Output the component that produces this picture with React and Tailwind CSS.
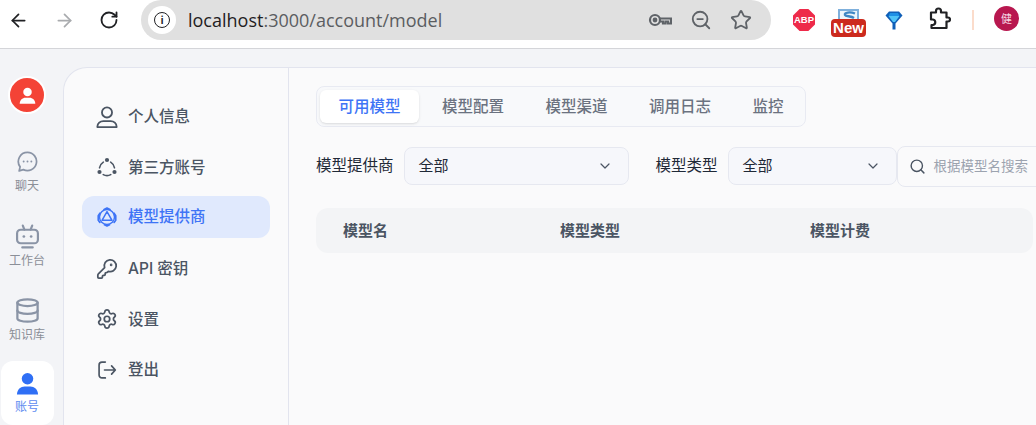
import React from 'react';
import { ArrowLeft, ArrowRight, RotateCw, ZoomOut, Star, ChevronDown, Search, KeyRound, Settings, Database } from 'lucide-react';

const FONT = "font-['Inter','Noto_Sans_CJK_SC',sans-serif]";

const UserOutline = ({ className }) => (
  <svg viewBox="0 0 24 24" fill="none" stroke="currentColor" strokeWidth="2" strokeLinecap="round" strokeLinejoin="round" className={className}>
    <circle cx="12" cy="7" r="5.500" />
    <path d="M1.500 23v-.5c0-3.500 3-6 6.500-6h8c3.500 0 6.500 2.500 6.500 6v.5z" />
  </svg>
);

const ThirdParty = ({ className }) => (
  <svg viewBox="0 0 24 24" fill="none" stroke="currentColor" strokeWidth="1.900" strokeLinecap="round" className={className}>
    <path d="M7.600 6.200A10 10 0 0 0 3 13" />
    <path d="M16.400 6.200A10 10 0 0 1 21 13" />
    <path d="M7.500 21.200a10 10 0 0 0 9 0" />
    <circle cx="12" cy="3.600" r="2.500" fill="currentColor" stroke="none" />
    <circle cx="3" cy="18" r="2.500" fill="currentColor" stroke="none" />
    <circle cx="21" cy="18" r="2.500" fill="currentColor" stroke="none" />
  </svg>
);

const Provider = ({ className }) => (
  <svg viewBox="0 0 24 24" fill="none" stroke="currentColor" strokeWidth="2" strokeLinejoin="round" strokeLinecap="round" className={className}>
    <path d="M8.500 3L12 1.200 15.500 3M20.500 7.500L22.500 10.500v5.500L20.500 18.500M3.500 18.500L1.500 16v-5.500L3.500 7.500M9 21.300l3 1.500 3-1.500" />
    <circle cx="12" cy="12" r="9" strokeWidth="1.700" />
    <path d="M12 5.500l6 10.500H6z" strokeWidth="1.800" />
  </svg>
);

const Logout = ({ className }) => (
  <svg viewBox="0 0 24 24" fill="none" stroke="currentColor" strokeWidth="2" strokeLinecap="round" strokeLinejoin="round" className={className}>
    <path d="M10 2.500H6A3.500 3.500 0 0 0 2.500 6v12A3.500 3.500 0 0 0 6 21.500h4" />
    <path d="M9 12h13M17.500 7l4.500 5-4.500 5" />
  </svg>
);

const ChatDots = ({ className }) => (
  <svg viewBox="0 0 24 24" fill="none" stroke="currentColor" strokeWidth="1.800" strokeLinejoin="round" className={className}>
    <path d="M12 2.500a9.500 9.500 0 1 1-4.300 18L3.300 21.800l1-4.200A9.500 9.500 0 0 1 12 2.500z" />
    <circle cx="8" cy="12" r="1" fill="currentColor" stroke="none" />
    <circle cx="12" cy="12" r="1" fill="currentColor" stroke="none" />
    <circle cx="16" cy="12" r="1" fill="currentColor" stroke="none" />
  </svg>
);

const BotFace = ({ className }) => (
  <svg viewBox="0 0 24 24" fill="none" stroke="currentColor" strokeWidth="2.100" strokeLinecap="round" className={className}>
    <path d="M7.500 1.500L9 5.500M16.500 1.500L15 5.500" />
    <rect x="2" y="5.500" width="20" height="13" rx="3.500" />
    <circle cx="8.500" cy="12" r="1.300" fill="currentColor" stroke="none" />
    <circle cx="15.500" cy="12" r="1.300" fill="currentColor" stroke="none" />
    <path d="M7 22.500h10" />
  </svg>
);

const UserSolid = ({ className }) => (
  <svg viewBox="0 0 24 24" fill="currentColor" className={className}>
    <circle cx="12" cy="7" r="6" />
    <path d="M1 23.500c0-5.500 4-8.500 8-8.500h6c4 0 8 3 8 8.500z" />
  </svg>
);

const Gem = () => (
  <svg viewBox="0 0 20 20" className="w-[20px] h-[20px]">
    <path d="M1.500 5.500L5 1.500h10l3.500 4-7 8v6h-3v-6z" fill="#0f5fb8" />
    <path d="M4.500 6h11L11 12H9z" fill="#4fc3f7" />
    <path d="M6 3h8l1.500 3h-11z" fill="#1e90e6" />
  </svg>
);

const PuzzlePiece = () => (
  <svg viewBox="0 0 24 24" fill="none" stroke="#202124" strokeWidth="2.200" strokeLinejoin="round" className="w-[24px] h-[24px]">
    <path d="M4 5.500h5V4a2.500 2.500 0 0 1 5 0v1.500h5.500v5H21a2 2 0 0 1 0 4h-1.500v6.500H4.500V18H6a2.800 2.800 0 0 0 0-5.500H4z" />
  </svg>
);

const KeyIcon = () => (
  <svg viewBox="0 0 24 24" fill="none" stroke="#5f6368" strokeWidth="2.200" className="w-[24px] h-[24px]">
    <circle cx="7" cy="12" r="5" />
    <circle cx="7" cy="12" r="1.300" fill="#5f6368" />
    <path d="M12 10.500H23V15.500H20V13.500H17.500V15.500H15V13.500H12" />
  </svg>
);

// the extension logo that sits behind the "New" badge
const ExtLogo = ({ className }) => (
  <svg viewBox="0 0 21 11" className={className}>
    <path d="M1 11V1h19v10" fill="#eef5fb" stroke="#7fb0dc" strokeWidth="2" />
    <path d="M17 4.500C12 2.500 6 3.500 7 6c.6 1.500 6 1 9 3" fill="none" stroke="#3f86c4" strokeWidth="2.400" />
  </svg>
);

const railItems = [
  { icon: ChatDots, label: '聊天', box: 'h-[75px]', size: 'w-[23px] h-[23px]' },
  { icon: BotFace, label: '工作台', box: 'h-[74px]', size: 'w-[25px] h-[25px]' },
  { icon: Database, label: '知识库', box: 'h-[74px]', size: 'w-[27px] h-[27px]' },
];

const navItems = [
  { icon: UserOutline, label: '个人信息', size: 'w-[22px] h-[22px]' },
  { icon: ThirdParty, label: '第三方账号', size: 'w-[20px] h-[20px]' },
  { icon: Provider, label: '模型提供商', active: true, size: 'w-[20px] h-[20px]' },
  { icon: KeyRound, label: 'API 密钥', size: 'w-[22px] h-[22px]' },
  { icon: Settings, label: '设置', size: 'w-[22px] h-[22px]' },
  { icon: Logout, label: '登出', size: 'w-[20px] h-[20px]' },
];

const tabs = ['可用模型', '模型配置', '模型渠道', '调用日志', '监控'];

const Toolbar = () => (
  <header className="h-[49px] shrink-0 bg-white border-b border-[#d4d5d9] flex items-start">
    <div className="flex items-center h-[40px]">
      <div className="w-[141px] flex items-center pl-[8px] gap-[24.500px]">
        <ArrowLeft className="w-[21px] h-[21px] text-[#202124]" strokeWidth={2} />
        <ArrowRight className="w-[21px] h-[21px] text-[#a9abae]" strokeWidth={2} />
        <RotateCw className="w-[20px] h-[20px] text-[#202124]" strokeWidth={2.2} />
      </div>
      <div className="w-[630px] h-[40px] rounded-full bg-[#e0e0e0] flex items-center pl-[7px] pr-[19px]">
        <div className="w-[28px] h-[28px] rounded-full bg-white flex items-center justify-center">
          <div className="w-[16px] h-[16px] rounded-full border-[1.5px] border-[#202124] flex items-center justify-center text-[10px] leading-none font-bold text-[#202124]">i</div>
        </div>
        <div className="ml-[12px] flex-1 font-['Open_Sans',sans-serif] text-[18px] text-[#5b5d61]">
          <span className="text-[#1f2023]">localhost</span>:3000/account/model
        </div>
        <div className="flex items-center gap-[18px]">
          <KeyIcon />
          <ZoomOut className="w-[22px] h-[22px] text-[#5f6368]" strokeWidth={2} />
          <Star className="w-[22px] h-[22px] text-[#5f6368]" strokeWidth={2} />
        </div>
      </div>
      <div className="flex items-center">
        <div className="ml-[22px] w-[22px] h-[22px] bg-[#ee2a4a] [clip-path:polygon(30%_0,70%_0,100%_30%,100%_70%,70%_100%,30%_100%,0_70%,0_30%)] text-white text-[9.500px] font-bold flex items-center justify-center font-['Liberation_Sans',sans-serif]">ABP</div>
        <div className="relative ml-[16px] w-[36px] h-[36px]">
          <ExtLogo className="absolute left-[7px] top-[7px] w-[21px] h-[11px]" />
          <div className="absolute left-0 top-[17px] w-[35px] h-[18px] bg-[#cc2a1d] rounded-[4px] text-white text-[15px] leading-[18px] font-bold text-center font-['Liberation_Sans',sans-serif]">New</div>
        </div>
        <div className="ml-[17px]"><Gem /></div>
        <div className="ml-[23px] mb-[3px]"><PuzzlePiece /></div>
        <div className="ml-[21px] w-[2px] h-[20px] bg-[#fbdccb]" />
        <div className="ml-[20px] mb-[3px] w-[25px] h-[25px] rounded-full bg-[#b8174f] text-[#f7d9e4] text-[11px] flex items-center justify-center font-['Noto_Sans_CJK_SC',sans-serif]">健</div>
      </div>
    </div>
  </header>
);

const Rail = () => (
  <aside className="w-[63px] shrink-0 flex flex-col items-center pt-[9px] pr-[9px]">
    <div className="w-[38px] h-[38px] rounded-full bg-[#f44336] border-2 border-white shrink-0 flex items-center justify-center text-white">
      <UserSolid className="w-[17px] h-[17px]" />
    </div>
    <div className="flex flex-col items-center mt-[28px]">
      {railItems.map((item) => (
        <div key={item.label} className={`${item.box} w-[54px] flex flex-col items-center justify-start pt-[6px] text-[#8a94a6]`}>
          <div className="h-[26px] flex items-center justify-center"><item.icon className={item.size} strokeWidth={2} /></div>
          <span className="mt-[3px] text-[12px] leading-[18px] text-[#8b8f98]">{item.label}</span>
        </div>
      ))}
    </div>
    <div className="mt-[-4px] w-[53px] h-[64px] shrink-0 bg-white rounded-xl flex flex-col items-center pt-[11px] text-[#2f6ff5]">
      <UserSolid className="w-[23px] h-[23px]" />
      <span className="mt-[3px] text-[12px] leading-[18px] text-[#5d8bf0]">账号</span>
    </div>
  </aside>
);

const NavPanel = () => (
  <nav className="w-[225px] shrink-0 border-r border-[#e2e4ee] px-[18px] pt-[27.800px] flex flex-col gap-[8.600px]">
    {navItems.map((item) => (
      <div
        key={item.label}
        className={`h-[42px] shrink-0 rounded-xl flex items-center pl-[13px] text-[15.500px] font-medium ${item.active ? '-mt-px mb-px bg-[#e0e9fd] text-[#3e74f6]' : 'text-[#4b5563]'}`}
      >
        <span className="w-[24px] mr-[9px] flex items-center justify-center">
          <item.icon className={item.size} strokeWidth={1.9} />
        </span>
        <span>{item.label}</span>
      </div>
    ))}
  </nav>
);

const Filter = ({ width, label, labelClass }) => (
  <div className={`${labelClass} flex items-center`}>
    <span className="text-[15.500px] text-[#1f2937] whitespace-nowrap">{label}</span>
    <div className={`${width} ml-[10px] h-[38px] rounded-lg border border-[#e6e8f0] bg-[#f6f7fb] flex items-center justify-between pl-[14px] pr-[15px]`}>
      <span className="text-[15px] text-[#1f2937]">全部</span>
      <ChevronDown className="w-[16px] h-[16px] text-[#4b5563]" strokeWidth={1.8} />
    </div>
  </div>
);

const Main = () => (
  <main className="flex-1 min-w-0 pl-[27px] pt-[18px]">
    <div className="w-[490px] h-[41px] rounded-lg border border-[#e8eaf2] bg-[#f8f9fb] flex items-center pl-[3px] gap-[4.500px]">
      {tabs.map((tab, i) => (
        <div
          key={tab}
          className={`h-[33px] rounded-md px-[18.500px] pt-px flex items-center text-[15.500px] whitespace-nowrap font-medium ${i === 0 ? 'bg-white text-[#3e74f6] shadow-sm' : 'text-[#6b7280]'}`}
        >
          {tab}
        </div>
      ))}
    </div>
    <div className="mt-[18px] h-[42px] flex items-center w-[800px]">
      <Filter label="模型提供商" width="w-[225px]" />
      <Filter label="模型类型" width="w-[169px]" labelClass="ml-[27px]" />
      <div className="w-[200px] h-[41px] rounded-l-lg border border-[#e6e8f0] flex items-center pl-[11px] gap-[8px]">
        <Search className="w-[17px] h-[17px] text-[#4b5563]" strokeWidth={2} />
        <span className="text-[13.500px] text-[#9ca3af] whitespace-nowrap">根据模型名搜索</span>
      </div>
    </div>
    <div className="mt-[21px] mr-[3px] h-[45px] pt-px rounded-xl bg-[#f3f4f6] flex items-center text-[15px] font-semibold text-[#4b5563]">
      <span className="w-[244px] pl-[27px]">模型名</span>
      <span className="w-[250px]">模型类型</span>
      <span>模型计费</span>
    </div>
  </main>
);

const App = () => (
  <div className={`${FONT} w-[1036px] h-[425px] overflow-hidden bg-[#f3f4f7] flex flex-col`}>
    <Toolbar />
    <div className="flex-1 min-h-0 flex pt-[18px]">
      <Rail />
      <div className="flex-1 min-w-0 flex rounded-tl-[24px] border-l border-t border-[#e2e4ee] bg-[#fafafb] overflow-hidden">
        <NavPanel />
        <Main />
      </div>
    </div>
  </div>
);

export default App;
